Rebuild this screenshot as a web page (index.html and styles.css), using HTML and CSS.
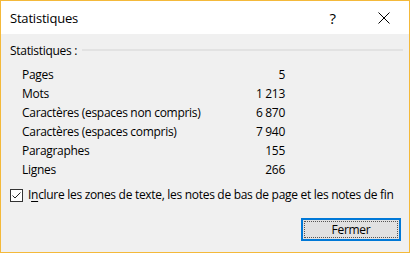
FILE: index.html
```html
<!DOCTYPE html>
<html lang="fr">
<head>
<meta charset="utf-8">
<title>Statistiques</title>
<link rel="stylesheet" href="styles.css">
</head>
<body>
<div class="window">
  <div class="titlebar">
    <div class="title">Statistiques</div>
    <div class="help">?</div>
    <div class="close">
      <svg width="12" height="12" viewBox="0 0 12 12"><path d="M0.5 0.5 L11.5 11.5 M11.5 0.5 L0.5 11.5" stroke="#000" stroke-width="1" fill="none"/></svg>
    </div>
  </div>
  <div class="content">
    <div class="group-head">
      <span class="group-label">Statistiques :</span>
      <span class="group-line"></span>
    </div>
    <div class="stats">
      <div class="label">Pages</div><div class="value">5</div>
      <div class="label">Mots</div><div class="value">1&nbsp;213</div>
      <div class="label">Caractères (espaces non compris)</div><div class="value">6&nbsp;870</div>
      <div class="label">Caractères (espaces compris)</div><div class="value">7&nbsp;940</div>
      <div class="label">Paragraphes</div><div class="value">155</div>
      <div class="label">Lignes</div><div class="value">266</div>
    </div>
    <div class="check-row">
      <span class="checkbox">
        <svg width="11" height="11" viewBox="0 0 11 11"><path d="M1.5 5.5 L4 8 L9.5 2.5" stroke="#222" stroke-width="1" fill="none"/></svg>
      </span>
      <span class="check-text">I<u>n</u>clure les zones de texte, les notes de bas de page et les notes de fin</span>
    </div>
    <div class="button-row">
      <button class="btn">Fermer</button>
    </div>
  </div>
</div>
</body>
</html>
```
FILE: styles.css
```css
html, body {
  margin: 0;
  padding: 0;
  background: #ffffff;
}

body {
  font-family: "Open Sans", "Noto Sans", sans-serif;
  font-size: 12px;
  color: #000;
  letter-spacing: -0.3px;
}

.window {
  width: 410px;
  height: 253px;
  box-sizing: border-box;
  border: 1px solid #f4b93a;
  background: #f0f0f0;
  display: flex;
  flex-direction: column;
}

.titlebar {
  height: 33px;
  flex: none;
  background: #fff;
  display: flex;
  align-items: center;
  padding-left: 9px;
  padding-right: 19px;
}

.title {
  font-size: 13px;
  letter-spacing: -0.2px;
  margin-top: 1px;
}

.help {
  margin-left: auto;
  font-size: 15px;
  letter-spacing: 0;
  line-height: 16px;
  margin-top: 1px;
}

.close {
  margin-left: 42px;
  width: 12px;
  height: 12px;
  margin-top: 1px;
}

.close svg {
  display: block;
}

.content {
  flex: 1;
  padding: 9px 6px 0 9px;
  display: flex;
  flex-direction: column;
}

.group-head {
  display: flex;
  align-items: center;
  height: 16px;
  line-height: 16px;
}

.group-line {
  flex: 1;
  height: 2px;
  background: #e2e2e2;
  margin-left: 5px;
  margin-bottom: 3px;
}

.stats {
  margin-top: 6px;
  margin-left: 12px;
  width: 263px;
  display: grid;
  grid-template-columns: 1fr auto;
  grid-auto-rows: 19px;
  line-height: 19px;
}

.value {
  text-align: right;
}

.check-row {
  margin-top: 6px;
  height: 19px;
  line-height: 19px;
  display: flex;
  align-items: center;
}

.checkbox {
  width: 13px;
  height: 13px;
  box-sizing: border-box;
  border: 1px solid #333;
  background: #fff;
  margin-top: 1px;
  flex: none;
}

.checkbox svg {
  display: block;
}

.check-text {
  margin-left: 5px;
  white-space: nowrap;
}

.check-text u {
  text-decoration-thickness: 1px;
  text-underline-offset: 2px;
}

.button-row {
  margin-top: 14px;
  display: flex;
  justify-content: flex-end;
  padding-right: 2px;
}

.btn {
  position: relative;
  width: 100px;
  height: 23px;
  box-sizing: border-box;
  border: 2px solid #0078d7;
  background: #e1e1e1;
  font-family: inherit;
  font-size: 12px;
  letter-spacing: -0.3px;
  color: #000;
  padding: 0 0 1px 0;
  margin: 0;
}

.btn::after {
  content: "";
  position: absolute;
  top: 1px;
  left: 1px;
  right: 1px;
  bottom: 1px;
  border: 1px dotted #555;
}
```
